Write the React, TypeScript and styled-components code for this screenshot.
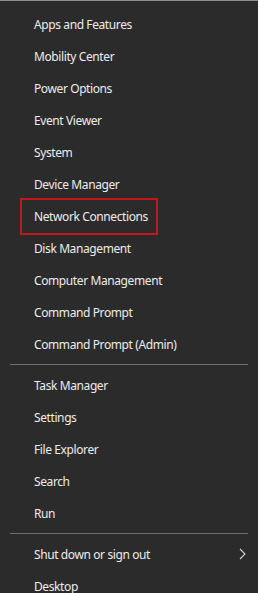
import React from 'react';
import styled, { createGlobalStyle } from 'styled-components';

const Global = createGlobalStyle`
  html, body { margin: 0; padding: 0; background: #2b2b2b; }
  body { font-family: 'Segoe UI', 'Noto Sans', 'Liberation Sans', sans-serif; }
`;

type Entry = { label: string; highlight?: boolean; submenu?: boolean };

const groups: Entry[][] = [
  [
    { label: 'Apps and Features' },
    { label: 'Mobility Center' },
    { label: 'Power Options' },
    { label: 'Event Viewer' },
    { label: 'System' },
    { label: 'Device Manager' },
    { label: 'Network Connections', highlight: true },
    { label: 'Disk Management' },
    { label: 'Computer Management' },
    { label: 'Command Prompt' },
    { label: 'Command Prompt (Admin)' },
  ],
  [
    { label: 'Task Manager' },
    { label: 'Settings' },
    { label: 'File Explorer' },
    { label: 'Search' },
    { label: 'Run' },
  ],
  [{ label: 'Shut down or sign out', submenu: true }, { label: 'Desktop' }],
];

export default function App() {
  return (
    <>
      <Global />
      <Menu>
        {groups.map((g, gi) => (
          <React.Fragment key={gi}>
            {gi > 0 && <Separator />}
            {g.map((e) => (
              <Item key={e.label} $highlight={e.highlight}>
                <Label>{e.label}</Label>
                {e.submenu && (
                  <Chevron width="7" height="12" viewBox="0 0 7 12">
                    <path d="M1 1l5 5-5 5" fill="none" stroke="#d0d0d0" strokeWidth="1.1" />
                  </Chevron>
                )}
              </Item>
            ))}
          </React.Fragment>
        ))}
      </Menu>
    </>
  );
}

const Menu = styled.div`
  width: 258px;
  height: 593px;
  box-sizing: border-box;
  overflow: hidden;
  background: #2b2b2b;
  border-top: 1px solid #8c8c8c;
  padding-top: 7px;
  display: flex;
  flex-direction: column;
`;

const Item = styled.div<{ $highlight?: boolean }>`
  position: relative;
  height: 32px;
  flex: none;
  display: flex;
  align-items: center;
  padding: 0 16px 0 34px;
  color: #ececec;
  font-size: 12px;
  letter-spacing: -0.4px;
  &::after {
    content: '';
    display: ${(p) => (p.$highlight ? 'block' : 'none')};
    position: absolute;
    left: 20px;
    top: -2px;
    width: 138px;
    height: 37px;
    box-sizing: border-box;
    border: 2px solid #c4161b;
  }
`;

const Label = styled.span`
  flex: 1;
  white-space: nowrap;
`;

const Chevron = styled.svg`
  flex: none;
  margin-right: -4px;
`;

const Separator = styled.div`
  flex: none;
  height: 1px;
  margin: 4px 10px;
  background: #6e6e6e;
`;
